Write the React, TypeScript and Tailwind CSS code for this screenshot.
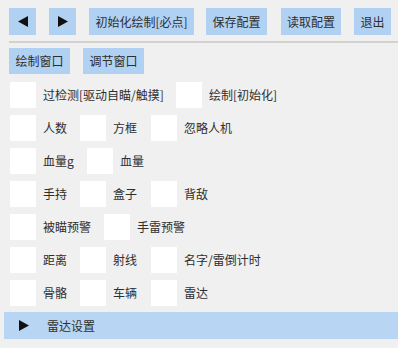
import React from "react";

const FONT = { fontFamily: '"Noto Sans CJK SC", "Noto Sans", sans-serif' };

function Btn({ w, h = "h-[27px]", children }: { w: string; h?: string; children: React.ReactNode }) {
  return (
    <div className={`${w} ${h} flex items-center justify-center bg-[#b1d1f3] text-[12px] text-[#2e2e2e] shrink-0`}>
      {children}
    </div>
  );
}

function Tri({ dir }: { dir: "l" | "r" }) {
  return (
    <svg width="10" height="11" viewBox="0 0 10 11">
      {dir === "l" ? <polygon points="10,0 10,11 0,5.5" fill="#111" /> : <polygon points="0,0 0,11 10,5.5" fill="#111" />}
    </svg>
  );
}

type Item = { label: string; w?: string };

function Check({ label, w }: Item) {
  return (
    <div className="flex items-center shrink-0">
      <div className="w-[26px] h-[26px] bg-white shrink-0" />
      <span className={`ml-[7px] text-[12px] text-[#2e2e2e] whitespace-nowrap ${w ?? ""}`}>{label}</span>
    </div>
  );
}

const rows: Item[][] = [
  [{ label: "过检测[驱动自瞄/触摸]", w: "w-[133px]" }, { label: "绘制[初始化]" }],
  [{ label: "人数", w: "w-[37px]" }, { label: "方框", w: "w-[38px]" }, { label: "忽略人机" }],
  [{ label: "血量g", w: "w-[44px]" }, { label: "血量" }],
  [{ label: "手持", w: "w-[37px]" }, { label: "盒子", w: "w-[38px]" }, { label: "背敌" }],
  [{ label: "被瞄预警", w: "w-[61px]" }, { label: "手雷预警" }],
  [{ label: "距离", w: "w-[37px]" }, { label: "射线", w: "w-[38px]" }, { label: "名字/雷倒计时" }],
  [{ label: "骨骼", w: "w-[37px]" }, { label: "车辆", w: "w-[38px]" }, { label: "雷达" }],
];

export default function App() {
  return (
    <div className="w-[398px] h-[348px] bg-[#f0f0f0] overflow-hidden pl-[9px] pt-[8px]" style={FONT}>
      <div className="flex">
        <Btn w="w-[27px]"><Tri dir="l" /></Btn>
        <div className="w-[13px]" />
        <Btn w="w-[27px]"><Tri dir="r" /></Btn>
        <div className="w-[13px]" />
        <Btn w="w-[105px]">初始化绘制[必点]</Btn>
        <div className="w-[12px]" />
        <Btn w="w-[61px]">保存配置</Btn>
        <div className="w-[14px]" />
        <Btn w="w-[60px]">读取配置</Btn>
        <div className="w-[13px]" />
        <Btn w="w-[37px]">退出</Btn>
      </div>
      <div className="mt-[6px] h-[2px] bg-[#d2d2d2]" />
      <div className="mt-[5px] flex gap-[13px]">
        <Btn w="w-[61px]" h="h-[26px]">绘制窗口</Btn>
        <Btn w="w-[61px]" h="h-[26px]">调节窗口</Btn>
      </div>
      <div className="mt-[8px] ml-[1px] flex flex-col gap-[7px]">
        {rows.map((r, i) => (
          <div key={i} className="flex items-center h-[26px]">
            {r.map((it, j) => (
              <Check key={j} {...it} />
            ))}
          </div>
        ))}
      </div>
      <div className="mt-[6px] -ml-[5px] h-[27px] bg-[#b8d6f3] flex items-center">
        <div className="ml-[15px]"><Tri dir="r" /></div>
        <span className="ml-[18px] text-[12px] text-[#2e2e2e]">雷达设置</span>
      </div>
    </div>
  );
}
